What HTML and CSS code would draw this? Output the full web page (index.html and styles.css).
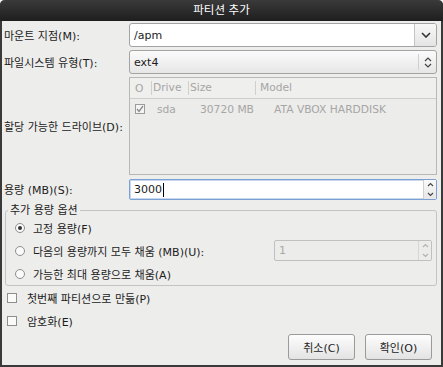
FILE: index.html
```html
<!DOCTYPE html>
<html lang="ko">
<head>
  <meta charset="UTF-8">
  <title>파티션 추가</title>
  <link rel="stylesheet" href="styles.css">
</head>
<body>
  <div class="dialog">
    <!-- 제목 표시줄 -->
    <div class="titlebar">파티션 추가</div>

    <div class="content">
      <div class="form-grid">
        <label class="field-label">마운트 지점(M):</label>
        <div class="combo-entry">
          <span class="combo-text">/apm</span>
          <span class="combo-btn">
            <svg width="10" height="6" viewBox="0 0 10 6"><path d="M1 1 L5 5 L9 1" fill="none" stroke="#333" stroke-width="1.6"/></svg>
          </span>
        </div>

        <label class="field-label">파일시스템 유형(T):</label>
        <div class="combo-button">
          <span class="combo-text">ext4</span>
          <span class="combo-sep"></span>
          <span class="combo-updown">
            <svg width="8" height="11" viewBox="0 0 8 11"><path d="M1 4 L4 1 L7 4 M1 7 L4 10 L7 7" fill="none" stroke="#444" stroke-width="1.2"/></svg>
          </span>
        </div>

        <label class="field-label">할당 가능한 드라이브(D):</label>
        <div class="drive-list">
          <div class="list-head">
            <span class="col col-check">O</span>
            <span class="col col-drive">Drive</span>
            <span class="col col-size">Size</span>
            <span class="col col-model">Model</span>
          </div>
          <div class="list-row">
            <span class="col col-check"><span class="mini-check">
              <svg width="8" height="8" viewBox="0 0 8 8"><path d="M1 4 L3 6.5 L7 1" fill="none" stroke="#8a8a8a" stroke-width="1.3"/></svg>
            </span></span>
            <span class="col col-drive">sda</span>
            <span class="col col-size">30720 MB</span>
            <span class="col col-model">ATA VBOX HARDDISK</span>
          </div>
        </div>

        <label class="field-label">용량 (MB)(S):</label>
        <div class="spin focused">
          <span class="spin-text">3000<span class="caret"></span></span>
          <span class="spin-btns">
            <svg width="7" height="5" viewBox="0 0 7 5"><path d="M1 4 L3.5 1.5 L6 4" fill="none" stroke="#444" stroke-width="1.1"/></svg>
            <svg width="7" height="5" viewBox="0 0 7 5"><path d="M1 1 L3.5 3.5 L6 1" fill="none" stroke="#444" stroke-width="1.1"/></svg>
          </span>
        </div>
      </div>

      <!-- 추가 용량 옵션 -->
      <fieldset class="group">
        <legend>추가 용량 옵션</legend>
        <div class="option-row">
          <span class="radio checked"></span>
          <span>고정 용량(F)</span>
        </div>
        <div class="option-row">
          <span class="radio"></span>
          <span>다음의 용량까지 모두 채움 (MB)(U):</span>
          <div class="spin disabled">
            <span class="spin-text">1</span>
            <span class="spin-btns">
              <svg width="7" height="5" viewBox="0 0 7 5"><path d="M1 4 L3.5 1.5 L6 4" fill="none" stroke="#b0b0b0" stroke-width="1.1"/></svg>
              <svg width="7" height="5" viewBox="0 0 7 5"><path d="M1 1 L3.5 3.5 L6 1" fill="none" stroke="#b0b0b0" stroke-width="1.1"/></svg>
            </span>
          </div>
        </div>
        <div class="option-row">
          <span class="radio"></span>
          <span>가능한 최대 용량으로 채움(A)</span>
        </div>
      </fieldset>

      <div class="check-row">
        <span class="checkbox"></span>
        <span>첫번째 파티션으로 만듦(P)</span>
      </div>
      <div class="check-row">
        <span class="checkbox"></span>
        <span>암호화(E)</span>
      </div>

      <div class="button-row">
        <button class="btn">취소(C)</button>
        <button class="btn">확인(O)</button>
      </div>
    </div>
  </div>
</body>
</html>
```

FILE: styles.css
```css
html, body {
  margin: 0;
  background: #f4f4f4;
}
body {
  font-family: "DejaVu Sans", "Noto Sans CJK KR", sans-serif;
  font-size: 11px;
  color: #1c1c1c;
  width: 443px;
  height: 367px;
  overflow: hidden;
}
.dialog {
  width: 443px;
  height: 367px;
  box-sizing: border-box;
  background: #ededeb;
  border: 2px solid #3a3a3a;
  border-top: none;
  border-radius: 5px 5px 0 0;
  display: flex;
  flex-direction: column;
}
.titlebar {
  height: 21px;
  margin: 0 -2px;
  background: linear-gradient(#3a3a3a, #1e1e1e);
  border-radius: 5px 5px 0 0;
  color: #fff;
  text-align: center;
  line-height: 21px;
  font-size: 11.5px;
}
.content {
  padding: 2px 4px 0 2px;
  display: flex;
  flex-direction: column;
}

/* 상단 입력 필드 */
.form-grid {
  display: grid;
  grid-template-columns: 125px 1fr;
  grid-template-rows: 24px 24px 98px 22px;
  row-gap: 3px;
  align-items: center;
}
.form-grid .spin {
  margin-top: 1px;
}
.field-label {
  white-space: nowrap;
}
.combo-entry,
.combo-button {
  height: 24px;
  box-sizing: border-box;
  border: 1px solid #a3a3a3;
  border-radius: 3px;
  display: flex;
  align-items: center;
}
.combo-entry {
  background: #fff;
}
.combo-text {
  flex: 1;
  padding-left: 4px;
}
.combo-btn {
  width: 21px;
  align-self: stretch;
  border-left: 1px solid #c4c4c4;
  background: linear-gradient(#f8f8f8, #e4e4e4);
  border-radius: 0 2px 2px 0;
  display: flex;
  align-items: center;
  justify-content: center;
}
.combo-button {
  background: linear-gradient(#fbfbfb, #e6e6e6);
}
.combo-sep {
  width: 1px;
  height: 16px;
  background: #cfcfcf;
}
.combo-updown {
  width: 17px;
  display: flex;
  justify-content: center;
}

/* 드라이브 목록 */
.drive-list {
  height: 98px;
  box-sizing: border-box;
  border: 1px solid #b8b8b8;
  background: #ececea;
  color: #a6a6a6;
  font-size: 10.7px;
}
.list-head,
.list-row {
  display: flex;
  align-items: center;
}
.list-head {
  height: 20px;
  border-bottom: 1px solid #cdcdcd;
  background: #efefed;
}
.list-row {
  height: 20px;
}
.col {
  box-sizing: border-box;
  white-space: nowrap;
}
.col-check {
  width: 21px;
  padding-left: 5px;
}
.col-drive {
  width: 37px;
  padding-left: 1px;
}
.col-size {
  width: 67px;
  padding-left: 1px;
}
.col-model {
  padding-left: 4px;
}
.list-head .col-drive,
.list-head .col-size,
.list-head .col-model {
  border-left: 1px solid #cfcfcf;
  line-height: 14px;
}
.list-row .col-drive {
  padding-left: 6px;
}
.list-row .col-size {
  padding-left: 12px;
}
.list-row .col-model {
  padding-left: 19px;
}
.mini-check {
  width: 8px;
  height: 8px;
  border: 1px solid #9c9c9c;
  background: #f4f4f4;
  display: flex;
  align-items: center;
  justify-content: center;
}

/* 스핀 버튼 */
.spin {
  height: 21px;
  box-sizing: border-box;
  border: 1px solid #a3a3a3;
  border-radius: 2px;
  background: #fff;
  display: flex;
  align-items: center;
}
.spin.focused {
  border-color: #7aa0d4;
  box-shadow: inset 0 0 0 1px #c6d7ef;
}
.spin-text {
  flex: 1;
  padding-left: 4px;
  display: flex;
  align-items: center;
}
.caret {
  width: 1px;
  height: 14px;
  background: #000;
  margin-left: 1px;
}
.spin-btns {
  width: 12px;
  align-self: stretch;
  border-left: 1px solid #d0d0d0;
  background: linear-gradient(#fafafa, #e6e6e6);
  display: flex;
  flex-direction: column;
  align-items: center;
  justify-content: space-around;
}
.spin.disabled {
  width: 158px;
  margin-left: auto;
  background: #ececea;
  border-color: #c0c0c0;
  color: #a8a8a8;
}
.spin.disabled .spin-btns {
  background: #ececea;
  border-left-color: #d6d6d6;
}

/* 추가 용량 옵션 프레임 */
.group {
  margin: 4px 0 0 1px;
  padding: 0 4px 0 8px;
  border: 1px solid #c3c3c3;
  border-radius: 3px;
  min-width: 0;
}
.group legend {
  padding: 0 2px;
  margin-left: -6px;
  line-height: 13px;
}
.option-row {
  height: 23px;
  display: flex;
  align-items: center;
  gap: 8px;
}
.option-row:first-of-type {
  margin-top: -1px;
}
.radio {
  width: 10px;
  height: 10px;
  box-sizing: border-box;
  border: 1px solid #8e8e8e;
  border-radius: 50%;
  background: #fafafa;
  display: flex;
  align-items: center;
  justify-content: center;
  flex-shrink: 0;
  margin-left: 1px;
}
.radio.checked::after {
  content: "";
  width: 4px;
  height: 4px;
  border-radius: 50%;
  background: #333;
}

/* 체크박스 */
.check-row {
  height: 23px;
  display: flex;
  align-items: center;
  gap: 10px;
  padding-left: 3px;
}
.check-row:first-of-type {
  margin-top: 2px;
}
.checkbox {
  width: 10px;
  height: 10px;
  box-sizing: border-box;
  border: 1px solid #8e8e8e;
  background: #fafafa;
}

/* 하단 버튼 */
.button-row {
  display: flex;
  justify-content: flex-end;
  gap: 10px;
  margin-top: 2px;
  padding-right: 5px;
}
.btn {
  width: 67px;
  height: 26px;
  border: 1px solid #9a9a9a;
  border-radius: 3px;
  background: linear-gradient(#fdfdfd, #e3e3e3);
  font-family: "DejaVu Sans", "Noto Sans CJK KR", sans-serif;
  font-size: 11px;
  color: #1c1c1c;
  padding: 0;
}
```
